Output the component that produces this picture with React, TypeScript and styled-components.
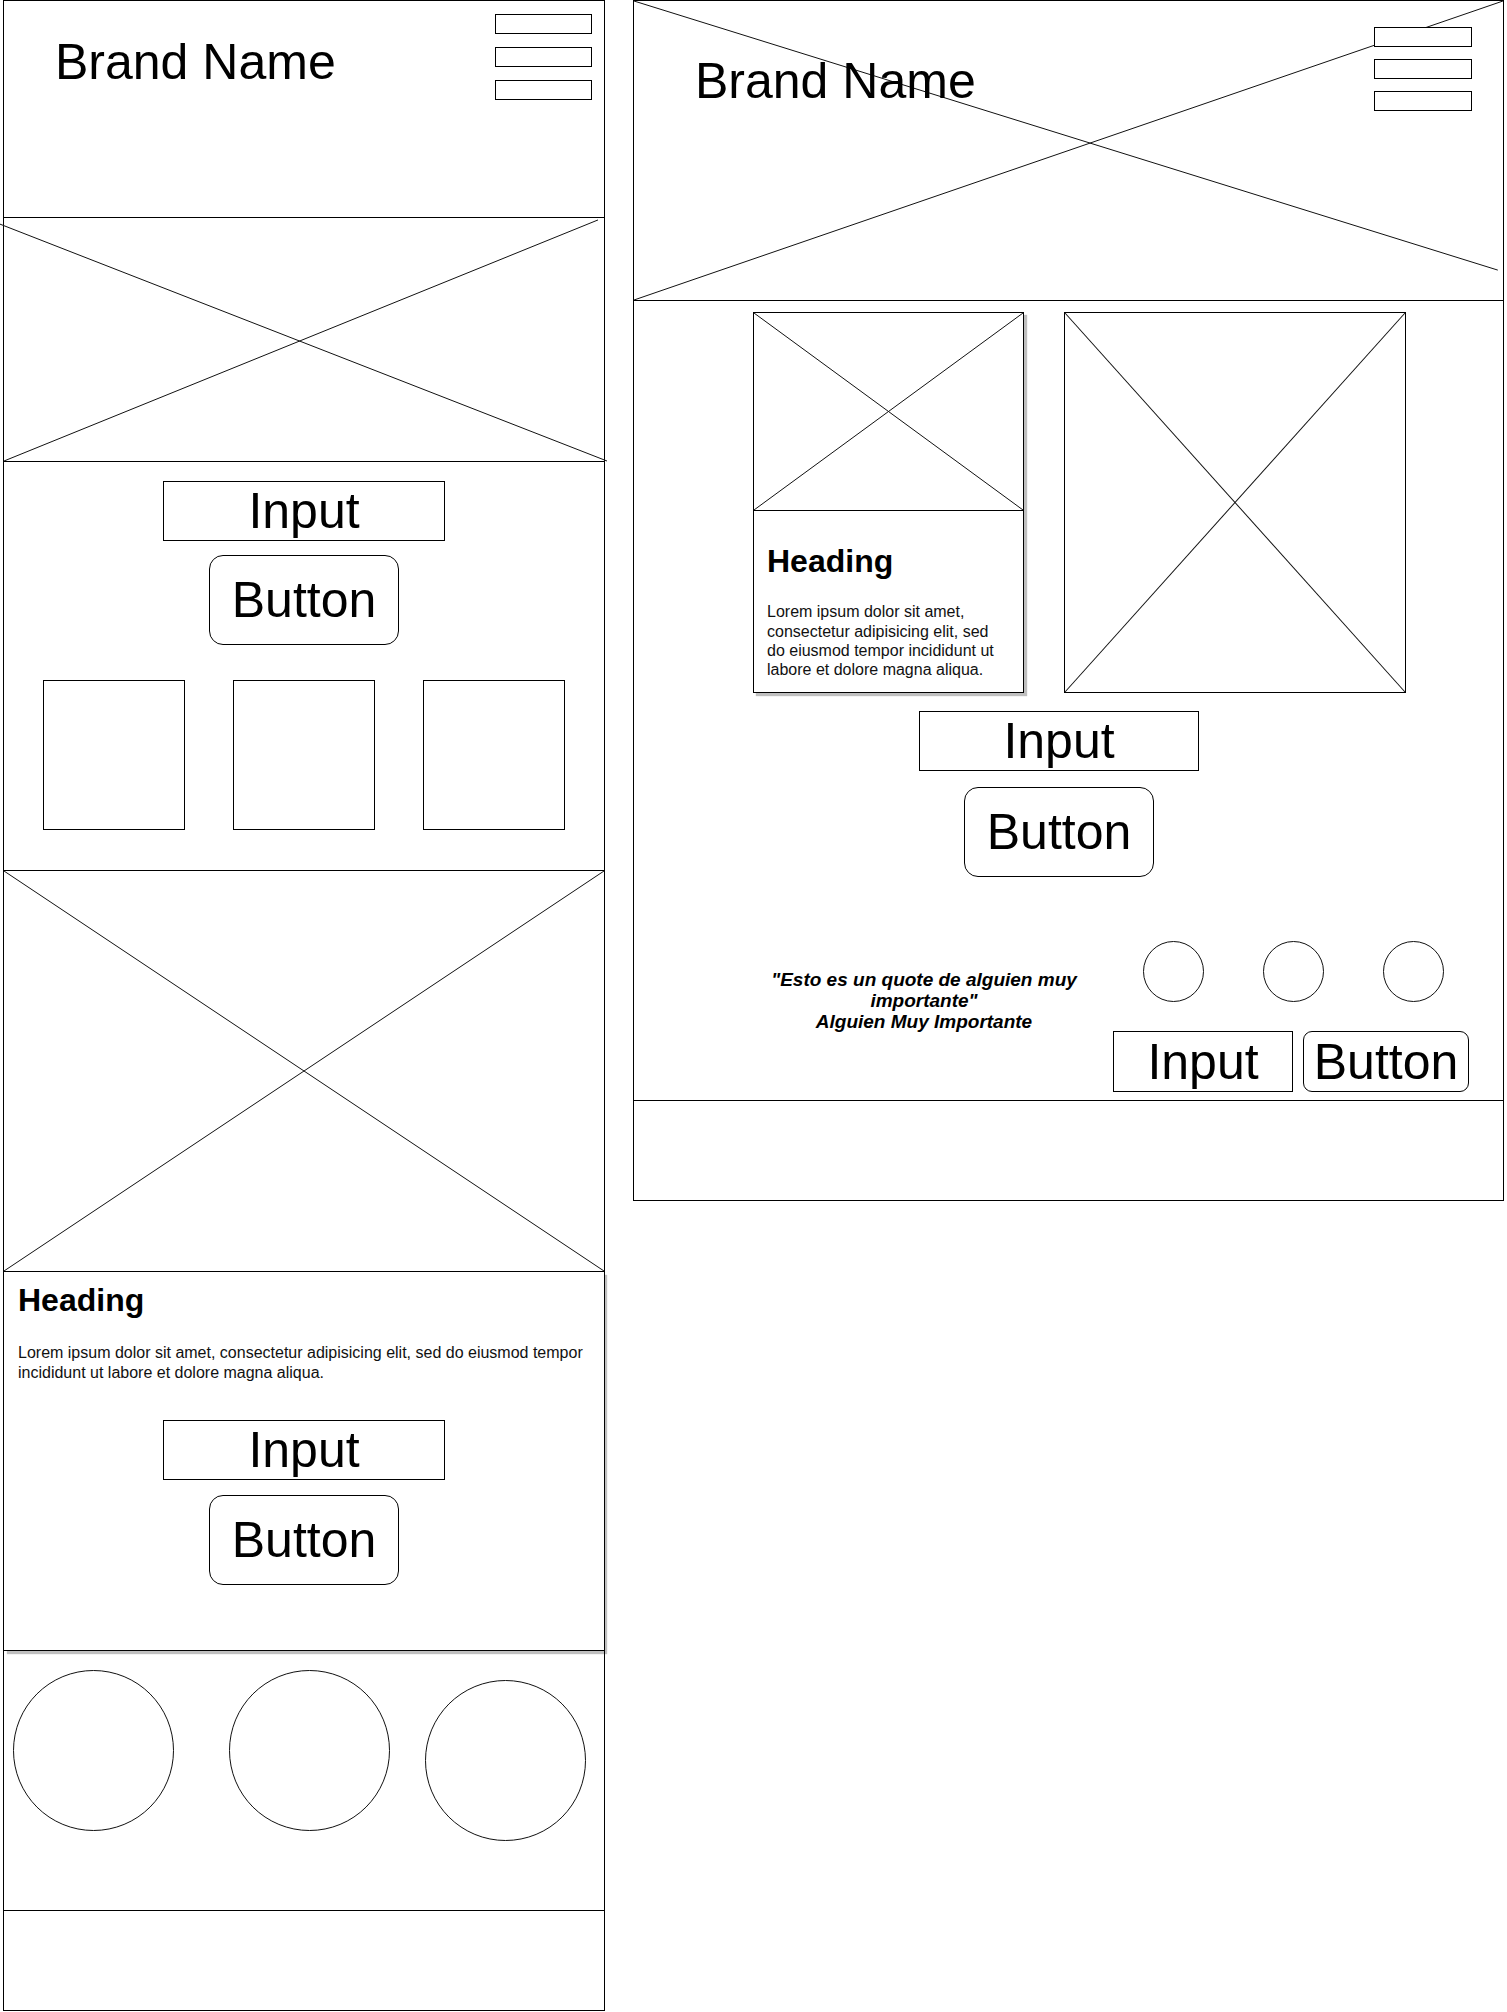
import React from "react";
import styled, { createGlobalStyle } from "styled-components";

const GlobalStyle = createGlobalStyle`
  html, body {
    margin: 0;
    padding: 0;
    background: #fff;
  }
  body {
    font-family: "Liberation Sans", Arial, sans-serif;
    color: #000;
  }
  * {
    box-sizing: border-box;
  }
`;

type Pt = [number, number, number, number];

const CrossSvg = styled.svg`
  position: absolute;
  inset: 0;
  width: 100%;
  height: 100%;
  overflow: visible;
  pointer-events: none;
`;

function Cross({ a = [0, 0, 100, 100], b = [0, 100, 100, 0] }: { a?: Pt; b?: Pt }) {
  return (
    <CrossSvg viewBox="0 0 100 100" preserveAspectRatio="none">
      <line x1={a[0]} y1={a[1]} x2={a[2]} y2={a[3]} stroke="#111" strokeWidth="1" vectorEffect="non-scaling-stroke" />
      <line x1={b[0]} y1={b[1]} x2={b[2]} y2={b[3]} stroke="#111" strokeWidth="1" vectorEffect="non-scaling-stroke" />
    </CrossSvg>
  );
}

const Page = styled.div`
  display: flex;
  align-items: flex-start;
  gap: 28px;
  padding-left: 3px;
  width: 1507px;
`;

const Column = styled.div<{ $w: number }>`
  width: ${(p) => p.$w}px;
  border: 1px solid #000;
  display: flex;
  flex-direction: column;
`;

const Block = styled.div<{ $h: number; $last?: boolean }>`
  position: relative;
  flex-shrink: 0;
  height: ${(p) => p.$h}px;
  border-bottom: ${(p) => (p.$last ? "none" : "1px solid #000")};
`;

const Header = styled(Block)<{ $pt: number; $pl: number; $pr: number }>`
  display: flex;
  justify-content: space-between;
  align-items: flex-start;
  padding: ${(p) => `${p.$pt}px ${p.$pr}px 0 ${p.$pl}px`};
`;

const Brand = styled.div<{ $mt: number }>`
  position: relative;
  margin-top: ${(p) => p.$mt}px;
  font-size: 50px;
  line-height: 1;
  white-space: nowrap;
`;

const Menu = styled.div<{ $w: number; $gap: number }>`
  position: relative;
  display: flex;
  flex-direction: column;
  gap: ${(p) => p.$gap}px;
  width: ${(p) => p.$w}px;
`;

const MenuBar = styled.div`
  height: 20px;
  border: 1px solid #000;
  background: #fff;
`;

const Stack = styled(Block)<{ $pt: number; $pr?: number }>`
  display: flex;
  flex-direction: column;
  align-items: center;
  padding-top: ${(p) => p.$pt}px;
  padding-right: ${(p) => p.$pr ?? 0}px;
`;

const InputBox = styled.div<{ $w: number; $h?: number; $mt?: number }>`
  display: flex;
  align-items: center;
  justify-content: center;
  width: ${(p) => p.$w}px;
  height: ${(p) => p.$h ?? 60}px;
  margin-top: ${(p) => p.$mt ?? 0}px;
  border: 1px solid #000;
  font-size: 50px;
  line-height: 1;
  flex-shrink: 0;
`;

const ButtonBox = styled(InputBox)<{ $r?: number }>`
  border-radius: ${(p) => p.$r ?? 14}px;
`;

const TileRow = styled.div`
  display: flex;
  gap: 48px;
  margin-top: 35px;
`;

const Tile = styled.div`
  width: 142px;
  height: 150px;
  border: 1px solid #000;
`;

const TextBlock = styled(Block)`
  padding: 9px 14px 0;
  display: flex;
  flex-direction: column;
  box-shadow: 3px 3px 1px rgba(0, 0, 0, 0.25);
  z-index: 1;
`;

const Heading = styled.h2`
  margin: 0;
  font-size: 32px;
  line-height: 1.2;
  font-weight: 700;
`;

const Body = styled.p<{ $mt: number }>`
  margin: ${(p) => p.$mt}px 0 0;
  font-size: 16px;
  line-height: 1.2;
  color: #111;
`;

const Centered = styled.div`
  display: flex;
  flex-direction: column;
  align-items: center;
`;

const CircleRow = styled(Block)`
  display: flex;
  align-items: flex-start;
`;

const Circle = styled.div<{ $d: number; $mt?: number; $ml?: number }>`
  flex-shrink: 0;
  width: ${(p) => p.$d}px;
  height: ${(p) => p.$d}px;
  margin-top: ${(p) => p.$mt ?? 0}px;
  margin-left: ${(p) => p.$ml ?? 0}px;
  border: 1px solid #111;
  border-radius: 50%;
`;

const Footer = styled.div`
  flex-shrink: 0;
  height: 99px;
`;

/* desktop column */

const Main = styled(Block)`
  display: flex;
  flex-direction: column;
  padding-top: 11px;
`;

const CardRow = styled.div`
  display: flex;
  gap: 40px;
  margin-left: 119px;
`;

const Card = styled.div`
  width: 271px;
  height: 381px;
  border: 1px solid #000;
  box-shadow: 3px 3px 1px rgba(0, 0, 0, 0.25);
  display: flex;
  flex-direction: column;
`;

const CardImage = styled.div`
  position: relative;
  height: 198px;
  flex-shrink: 0;
  border-bottom: 1px solid #000;
`;

const CardBody = styled.div`
  padding: 31px 16px 0 13px;
`;

const Picture = styled.div`
  position: relative;
  width: 342px;
  height: 381px;
  border: 1px solid #000;
`;

const FormStack = styled(Centered)`
  padding-right: 19px;
  margin-top: 18px;
`;

const BottomRow = styled.div`
  display: flex;
  align-items: flex-start;
  gap: 29px;
  margin-top: 64px;
  padding-left: 130px;
`;

const Quote = styled.p`
  width: 320px;
  margin: 28px 0 0;
  font-size: 19px;
  line-height: 21px;
  font-weight: 700;
  font-style: italic;
  text-align: center;
`;

const Aside = styled.div`
  display: flex;
  flex-direction: column;
`;

const Dots = styled.div`
  display: flex;
  gap: 59px;
  padding-left: 30px;
`;

const Controls = styled.div`
  display: flex;
  gap: 10px;
  margin-top: 29px;
`;

const lorem =
  "Lorem ipsum dolor sit amet, consectetur adipisicing elit, sed do eiusmod tempor incididunt ut labore et dolore magna aliqua.";

export default function App() {
  return (
    <>
      <GlobalStyle />
      <Page>
        <Column $w={602}>
          <Header $h={217} $pt={13} $pl={51} $pr={12}>
            <Brand $mt={23}>Brand Name</Brand>
            <Menu $w={97} $gap={13}>
              <MenuBar />
              <MenuBar />
              <MenuBar />
            </Menu>
          </Header>

          <Block $h={244}>
            <Cross a={[-0.7, 2.5, 100.5, 100]} b={[0, 100, 99, 0.8]} />
          </Block>

          <Stack $h={409} $pt={19}>
            <InputBox $w={282}>Input</InputBox>
            <ButtonBox $w={190} $h={90} $mt={14}>
              Button
            </ButtonBox>
            <TileRow>
              <Tile />
              <Tile />
              <Tile />
            </TileRow>
          </Stack>

          <Block $h={401}>
            <Cross />
          </Block>

          <TextBlock $h={379}>
            <Heading>Heading</Heading>
            <Body $mt={24}>{lorem}</Body>
            <Centered>
              <InputBox $w={282} $mt={38}>
                Input
              </InputBox>
              <ButtonBox $w={190} $h={90} $mt={15}>
                Button
              </ButtonBox>
            </Centered>
          </TextBlock>

          <CircleRow $h={260}>
            <Circle $d={161} $mt={19} $ml={9} />
            <Circle $d={161} $mt={19} $ml={55} />
            <Circle $d={161} $mt={29} $ml={35} />
          </CircleRow>

          <Footer />
        </Column>

        <Column $w={871}>
          <Header $h={300} $pt={26} $pl={61} $pr={31}>
            <Cross a={[0, 0, 99.4, 90]} b={[0, 100, 100, 0]} />
            <Brand $mt={29}>Brand Name</Brand>
            <Menu $w={98} $gap={12}>
              <MenuBar />
              <MenuBar />
              <MenuBar />
            </Menu>
          </Header>

          <Main $h={800}>
            <CardRow>
              <Card>
                <CardImage>
                  <Cross />
                </CardImage>
                <CardBody>
                  <Heading>Heading</Heading>
                  <Body $mt={22}>{lorem}</Body>
                </CardBody>
              </Card>
              <Picture>
                <Cross />
              </Picture>
            </CardRow>

            <FormStack>
              <InputBox $w={280}>Input</InputBox>
              <ButtonBox $w={190} $h={90} $mt={16}>
                Button
              </ButtonBox>
            </FormStack>

            <BottomRow>
              <Quote>
                "Esto es un quote de alguien muy importante"
                <br />
                Alguien Muy Importante
              </Quote>
              <Aside>
                <Dots>
                  <Circle $d={61} />
                  <Circle $d={61} />
                  <Circle $d={61} />
                </Dots>
                <Controls>
                  <InputBox $w={180} $h={61}>
                    Input
                  </InputBox>
                  <ButtonBox $w={166} $h={61} $r={9}>
                    Button
                  </ButtonBox>
                </Controls>
              </Aside>
            </BottomRow>
          </Main>

          <Footer />
        </Column>
      </Page>
    </>
  );
}
